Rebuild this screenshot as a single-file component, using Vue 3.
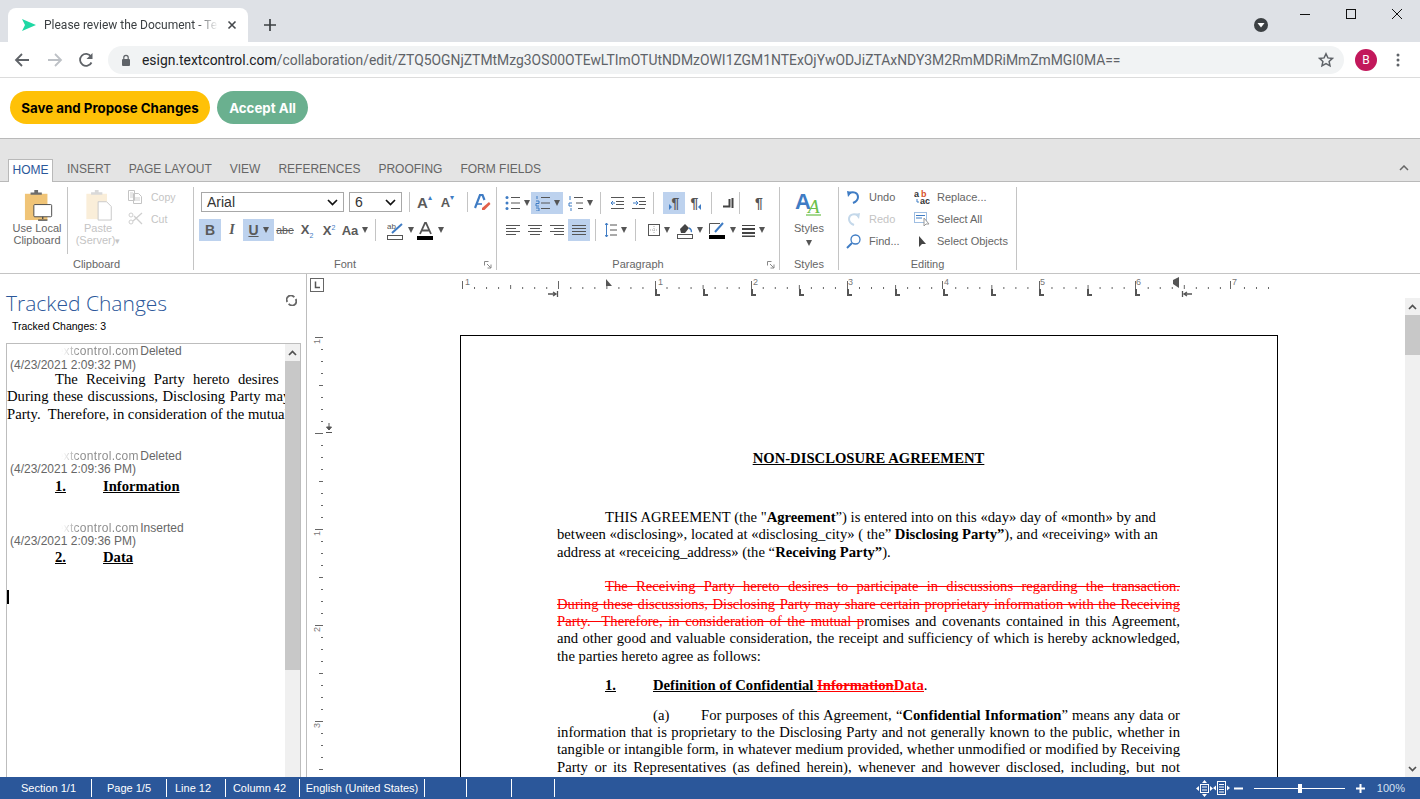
<script setup>
const url = 'ZTQ5OGNjZTMtMzg3OS00OTEwLTImOTUtNDMzOWI1ZGM1NTExOjYwODJiZTAxNDY3M2RmMDRiMmZmMGI0MA=='

const tabs = ['INSERT', 'PAGE LAYOUT', 'VIEW', 'REFERENCES', 'PROOFING', 'FORM FIELDS']

const deletedLines = [
  'The Receiving Party hereto desires to participate in discussions regarding the transaction.',
  'During these discussions, Disclosing Party may share certain proprietary information with the Receiving',
  'Party.  Therefore, in consideration of the mutual p'
]

const statusItems = ['Section 1/1', 'Page 1/5', 'Line 12', 'Column 42', 'English (United States)', '', '', '']

// horizontal ruler, x values are relative to the left of the document pane
const hTicks = []
for (let i = 0; i <= 67; i++) {
  if (i % 8 === 0) continue
  const x = 155 + i * 12.03
  hTicks.push({ x, y: i % 4 === 0 ? 285 - 274 : 287 - 274, h: i % 4 === 0 ? 4 : 2 })
}
const hInches = [155, 251, 348, 444, 540, 635, 732, 828, 923]
const hLabels = [
  { x: 158, t: '1' }, { x: 351, t: '1' }, { x: 446, t: '2' }, { x: 541, t: '3' },
  { x: 637, t: '4' }, { x: 733, t: '5' }, { x: 829, t: '6' }, { x: 925, t: '7' }
]
const tabStops = []
for (let x = 348; x <= 828; x += 48) tabStops.push(x)

// vertical ruler, y values are relative to the top of the page row
const vTicks = []
for (let k = 0; k < 37; k++) {
  const w = k % 8 === 0 ? 8 : k % 4 === 0 ? 4 : 2
  vTicks.push({ y: 2 + k * 12, x: 16 - w, w })
}
const vLabels = [
  { y: 3, t: '1' }, { y: 195, t: '1' }, { y: 291, t: '2' }, { y: 387, t: '3' }
]
</script>

<template>
  <div class="window">
    <div class="tabstrip">
      <div class="tab">
        <svg class="favicon" width="16" height="14" viewBox="0 0 16 14"><path d="M1 1l14 6-14 6 3-6z" fill="#1fd8a4"/></svg>
        <span class="tab-title">Please review the Document - Textcontrol</span>
        <svg class="tab-close" width="10" height="10" viewBox="0 0 10 10"><path d="M1.500 1.500l7 7M8.500 1.500l-7 7" stroke="#45484c" stroke-width="1.600"/></svg>
      </div>
      <svg class="new-tab" width="14" height="14" viewBox="0 0 14 14"><path d="M7 1v12M1 7h12" stroke="#3c4043" stroke-width="1.700"/></svg>
      <div class="strip-right">
        <svg class="media" width="14" height="14" viewBox="0 0 14 14"><circle cx="7" cy="7" r="7" fill="#3c4043"/><path d="M3.500 5h7L7 9.500z" fill="#fff"/></svg>
        <svg class="win-btn" width="46" height="14" viewBox="0 0 46 14"><path d="M18 7.500h10" stroke="#111" stroke-width="1"/></svg>
        <svg class="win-btn" width="46" height="14" viewBox="0 0 46 14"><rect x="18.500" y="2.500" width="9" height="9" fill="none" stroke="#111"/></svg>
        <svg class="win-btn" width="46" height="14" viewBox="0 0 46 14"><path d="M18 2l10 10M28 2L18 12" stroke="#111" stroke-width="1"/></svg>
      </div>
    </div>

    <div class="toolbar">
      <svg class="nav" width="16" height="16" viewBox="0 0 16 16"><path d="M15 8H2M8 2L2 8l6 6" fill="none" stroke="#5f6368" stroke-width="1.800"/></svg>
      <svg class="nav nav-fwd" width="16" height="16" viewBox="0 0 16 16"><path d="M1 8h13M8 2l6 6-6 6" fill="none" stroke="#bdc1c6" stroke-width="1.800"/></svg>
      <svg class="nav nav-reload" width="16" height="16" viewBox="0 0 16 16"><path d="M13.500 10.500A6 6 0 1 1 13 4.500" fill="none" stroke="#5f6368" stroke-width="1.800"/><path d="M14.500 1v6h-6z" fill="#5f6368"/></svg>
      <div class="omnibox">
        <svg width="10" height="12" viewBox="0 0 10 12"><rect x="1" y="5" width="8" height="7" rx="1" fill="#5f6368"/><path d="M2.800 5V3.500a2.200 2.200 0 0 1 4.400 0V5" fill="none" stroke="#5f6368" stroke-width="1.200"/></svg>
        <span class="url"><span class="host">esign.textcontrol.com</span>/collaboration/edit/{{ url }}</span>
        <svg class="star" width="16" height="16" viewBox="0 0 16 16"><path d="M8 1.800l1.900 4.100 4.500.5-3.300 3 .9 4.400L8 11.600l-4 2.200.9-4.400-3.300-3 4.500-.5z" fill="none" stroke="#5f6368" stroke-width="1.500"/></svg>
      </div>
      <div class="avatar">B</div>
      <svg class="dots" width="4" height="14" viewBox="0 0 4 14"><circle cx="2" cy="2" r="1.500" fill="#5f6368"/><circle cx="2" cy="7" r="1.500" fill="#5f6368"/><circle cx="2" cy="12" r="1.500" fill="#5f6368"/></svg>
    </div>

    <div class="actions">
      <button class="pill pill-save">Save and Propose Changes</button>
      <button class="pill pill-accept">Accept All</button>
    </div>

    <div class="ribbon-tabs">
      <div class="rtab rtab-active">HOME</div>
      <div v-for="t in tabs" :key="t" class="rtab">{{ t }}</div>
      <svg class="collapse" width="10" height="6" viewBox="0 0 10 6"><path d="M1 5l4-4 4 4" fill="none" stroke="#666" stroke-width="1.500"/></svg>
    </div>

    <div class="ribbon">
      <!-- clipboard -->
      <section class="group g-clip">
        <div class="group-body clip-body">
          <div class="big-btn first">
            <svg width="30" height="31" viewBox="0 0 32 33">
              <rect x="1" y="4" width="24" height="28" fill="#f0c477"/>
              <path d="M7 5V2.500h4V0h4v2.500h4V5z" fill="#6d6d6d"/>
              <rect x="10.500" y="15.500" width="19" height="13" rx="1" fill="#fff" stroke="#444"/>
              <path d="M20 28.500v2.500M15 32h10" stroke="#444" stroke-width="1.300"/>
            </svg>
            <span class="big-label">Use Local<br>Clipboard</span>
          </div>
          <i class="vsep tall"></i>
          <div class="big-btn off">
            <svg width="28" height="31" viewBox="0 0 29 33">
              <rect x="0" y="4" width="22" height="27" fill="#faeed9"/>
              <path d="M5 5V2.500h4V0h4v2.500h4V5z" fill="#d9d9d9"/>
              <path d="M12.500 12.500h9l5 5v14.500h-14z" fill="#fff" stroke="#c8c8c8"/>
            </svg>
            <span class="big-label">Paste<br>(Server)<b class="mini-caret">▾</b></span>
          </div>
          <div class="small-col off">
            <div class="small-row">
              <svg width="15" height="14" viewBox="0 0 15 14"><path d="M.5.500h6v10h-6zM5.500 3.500h5l3 3v7h-8z" fill="#fff" stroke="#c4c4c4"/><path d="M2 3h3M2 5h3M2 7h3M7 8h5M7 10h5" stroke="#cfcfcf"/></svg>
              <span>Copy</span>
            </div>
            <div class="small-row">
              <svg width="15" height="14" viewBox="0 0 15 14"><path d="M14 1L5 9M14 12L6 4" stroke="#cfcfcf" stroke-width="1.300"/><circle cx="3" cy="3" r="2" fill="none" stroke="#cfcfcf"/><circle cx="3" cy="10" r="2" fill="none" stroke="#cfcfcf"/></svg>
              <span>Cut</span>
            </div>
          </div>
        </div>
        <div class="group-name">Clipboard</div>
      </section>

      <!-- font -->
      <section class="group g-font">
        <div class="group-body">
          <div class="row font-row1">
            <div class="fake-select sel-font">Arial<svg width="11" height="7" viewBox="0 0 11 7"><path d="M1 1l4.500 4.500L10 1" fill="none" stroke="#111" stroke-width="1.700"/></svg></div>
            <div class="fake-select sel-size">6<svg width="11" height="7" viewBox="0 0 11 7"><path d="M1 1l4.500 4.500L10 1" fill="none" stroke="#111" stroke-width="1.700"/></svg></div>
            <i class="vsep sep-a"></i>
            <div class="ib w23"><span class="glyph-a">A</span><b class="up-mark">▴</b></div>
            <div class="ib w23"><span class="glyph-a small">A</span><b class="up-mark">▾</b></div>
            <i class="vsep sep-a2"></i>
            <div class="ib w20">
              <svg width="17" height="16" viewBox="0 0 17 16"><path d="M1 14L6 1h2.500l2 5" fill="none" stroke="#3f7cc4" stroke-width="2.200"/><path d="M3 10h5" stroke="#3f7cc4" stroke-width="1.600"/><path d="M8 14l7-6 1.500 2-6 6H8z" fill="#e2604a"/></svg>
            </div>
          </div>
          <div class="row font-row2">
            <div class="ib w22 on"><b class="t-b">B</b></div>
            <div class="ib w22"><i class="t-i">I</i></div>
            <div class="ib w31 on"><span class="t-u">U</span><i class="caret"></i></div>
            <div class="ib w22"><span class="t-abe">abe</span></div>
            <div class="ib w22"><span class="t-x">X<sub>2</sub></span></div>
            <div class="ib w22"><span class="t-x">X<sup>2</sup></span></div>
            <div class="ib w30"><span class="t-aa">Aa</span><i class="caret"></i></div>
            <i class="vsep sep-b"></i>
            <div class="ib w30">
              <svg width="17" height="19" viewBox="0 0 17 19"><text x="0" y="8" class="svg-mini">ab</text><path d="M5 12L15 3" stroke="#3f7cc4" stroke-width="2"/><rect x=".5" y="14.500" width="15" height="4" fill="#fff" stroke="#555"/></svg>
              <i class="caret"></i>
            </div>
            <div class="ib w30">
              <svg width="17" height="19" viewBox="0 0 17 19"><path d="M3 13L8 2h1l5 11M5 9.500h7" fill="none" stroke="#555" stroke-width="1.800"/><rect x="0" y="15" width="16" height="4" fill="#000"/></svg>
              <i class="caret"></i>
            </div>
          </div>
        </div>
        <div class="group-name">Font
          <svg class="launcher" width="8" height="8" viewBox="0 0 8 8"><path d="M.5.500h4M.5.500v4M3 3l4 4M7 3.500V7H3.500" fill="none" stroke="#888"/></svg>
        </div>
      </section>

      <!-- paragraph -->
      <section class="group g-para">
        <div class="group-body">
          <div class="row para-row1">
            <div class="ib w28">
              <svg width="15" height="16" viewBox="0 0 15 16"><g fill="#3f7cc4"><circle cx="2" cy="2.500" r="1.500"/><circle cx="2" cy="8" r="1.500"/><circle cx="2" cy="13.500" r="1.500"/></g><path d="M6 2.500h9M6 8h9M6 13.500h9" stroke="#555"/></svg>
              <i class="caret"></i>
            </div>
            <div class="ib w32 on">
              <svg width="15" height="16" viewBox="0 0 15 16"><path d="M2 1v3M1 6h3v2.500H1V11h3M1 13h3v3H1" fill="none" stroke="#3f7cc4"/><path d="M6 2.500h9M6 8h9M6 13.500h9" stroke="#555"/></svg>
              <i class="caret"></i>
            </div>
            <div class="ib w30 gap3">
              <svg width="15" height="16" viewBox="0 0 15 16"><path d="M2 1v4M4 8H1v3h3M3 13v3" fill="none" stroke="#3f7cc4"/><path d="M6 2.500h9M8 8h7M10 13.500h5" stroke="#555"/></svg>
              <i class="caret"></i>
            </div>
            <i class="vsep sep-c"></i>
            <div class="ib w22">
              <svg width="14" height="12" viewBox="0 0 14 12"><path d="M1 .500h13M6 4.500h8M6 7.500h8M1 11.500h13" stroke="#555"/><path d="M5 6H1M3 4L1 6l2 2" fill="none" stroke="#3f7cc4"/></svg>
            </div>
            <div class="ib w22">
              <svg width="14" height="12" viewBox="0 0 14 12"><path d="M0 .500h13M7 4.500h7M7 7.500h7M0 11.500h13" stroke="#555"/><path d="M1 6h5M4 4l2 2-2 2" fill="none" stroke="#3f7cc4"/></svg>
            </div>
            <i class="vsep sep-d"></i>
            <div class="ib w22 on no-gap"><i class="dir-mark to-right"></i><span class="pilcrow">¶</span></div>
            <div class="ib w22 no-gap"><span class="pilcrow">¶</span><i class="dir-mark to-left"></i></div>
            <i class="vsep sep-e"></i>
            <div class="ib w22">
              <svg width="11" height="10" viewBox="0 0 11 10"><path d="M0 8.500h6.500V1M9.500 0v10" fill="none" stroke="#444" stroke-width="2"/></svg>
            </div>
            <i class="vsep sep-f"></i>
            <div class="ib w22"><span class="pilcrow">¶</span></div>
          </div>
          <div class="row para-row2">
            <div class="ib w22"><svg width="15" height="11" viewBox="0 0 15 11"><path d="M0 .500h14M0 3.500h10M0 6.500h14M0 9.500h10" stroke="#555"/></svg></div>
            <div class="ib w22"><svg width="15" height="11" viewBox="0 0 15 11"><path d="M0 .500h14M2 3.500h10M0 6.500h14M2 9.500h10" stroke="#555"/></svg></div>
            <div class="ib w22"><svg width="15" height="11" viewBox="0 0 15 11"><path d="M0 .500h14M4 3.500h10M0 6.500h14M4 9.500h10" stroke="#555"/></svg></div>
            <div class="ib w22 on"><svg width="15" height="11" viewBox="0 0 15 11"><path d="M0 .500h14M0 3.500h14M0 6.500h14M0 9.500h14" stroke="#555"/></svg></div>
            <i class="vsep sep-g"></i>
            <div class="ib w29">
              <svg width="12" height="16" viewBox="0 0 12 16"><path d="M1.500 1v14M0 3l1.500-2L3 3M0 13l1.500 2L3 13" fill="none" stroke="#3f7cc4"/><path d="M5 3h7M5 8h7M5 13h7" stroke="#555"/></svg>
              <i class="caret"></i>
            </div>
            <i class="vsep sep-h"></i>
            <div class="ib w30">
              <svg width="12" height="12" viewBox="0 0 12 12"><rect x=".5" y=".5" width="11" height="11" fill="none" stroke="#555"/><path d="M6 2v8M2 6h8" stroke="#aaa" stroke-dasharray="1 1"/></svg>
              <i class="caret"></i>
            </div>
            <div class="ib w32">
              <svg width="16" height="18" viewBox="0 0 16 18"><path d="M3 8l5-5 4 4-4 5H4z" fill="#444"/><path d="M12 7c2 1 3 3 2 4" fill="none" stroke="#3f7cc4" stroke-width="1.500"/><rect x=".5" y="13.500" width="15" height="4" fill="#fff" stroke="#555"/></svg>
              <i class="caret"></i>
            </div>
            <div class="ib w32">
              <svg width="17" height="18" viewBox="0 0 17 18"><path d="M.5 13V2.500H11" fill="none" stroke="#555"/><path d="M6 11L14 2" stroke="#3f7cc4" stroke-width="2"/><rect x="0" y="14" width="16" height="4" fill="#000"/></svg>
              <i class="caret"></i>
            </div>
            <div class="ib w30">
              <svg width="13" height="13" viewBox="0 0 13 13"><path d="M0 1h13v1H0zM0 4h13v2H0zM0 8h13v2H0zM0 11.500h13V13H0z" fill="#444"/></svg>
              <i class="caret"></i>
            </div>
          </div>
        </div>
        <div class="group-name">Paragraph
          <svg class="launcher" width="8" height="8" viewBox="0 0 8 8"><path d="M.5.500h4M.5.500v4M3 3l4 4M7 3.500V7H3.500" fill="none" stroke="#888"/></svg>
        </div>
      </section>

      <!-- styles -->
      <section class="group g-styles">
        <div class="group-body styles-body">
          <svg width="28" height="26" viewBox="0 0 28 26">
            <text x="0" y="18" class="svg-styles-a">A</text>
            <text x="13" y="22" class="svg-styles-b">A</text>
            <path d="M11 24h15" stroke="#6cc04a" stroke-width="1.200"/>
          </svg>
          <span class="styles-text">Styles</span>
          <i class="caret"></i>
        </div>
        <div class="group-name">Styles</div>
      </section>

      <!-- editing -->
      <section class="group g-edit">
        <div class="group-body edit-body">
          <div class="edit-col">
            <div class="edit-row">
              <svg width="15" height="15" viewBox="0 0 15 15"><path d="M3 3.500c4-2.500 9-1 9 3.500 0 3-2.500 5-5 6" fill="none" stroke="#3f7cc4" stroke-width="2"/><path d="M1 1l1 6 4-5z" fill="#3f7cc4"/></svg>
              <span>Undo</span>
            </div>
            <div class="edit-row off">
              <svg width="15" height="15" viewBox="0 0 15 15"><path d="M12 3.500C8 1 3 2.500 3 7c0 3 2.500 5 5 6" fill="none" stroke="#c4d8ea" stroke-width="2"/><path d="M14 1l-1 6-4-5z" fill="#c4d8ea"/></svg>
              <span>Redo</span>
            </div>
            <div class="edit-row">
              <svg width="15" height="15" viewBox="0 0 15 15"><circle cx="9.500" cy="5.500" r="4.500" fill="none" stroke="#3f7cc4" stroke-width="1.300"/><path d="M6 9l-5 5" stroke="#3f7cc4" stroke-width="2"/></svg>
              <span>Find...</span>
            </div>
          </div>
          <div class="edit-col edit-col2">
            <div class="edit-row">
              <svg width="16" height="15" viewBox="0 0 16 15"><text x="0" y="6.500" class="svg-mini2">a</text><text x="7" y="6.500" class="svg-mini2 red">b</text><text x="6" y="14" class="svg-mini2">ac</text><path d="M3 9v3h2" fill="none" stroke="#3f7cc4"/></svg>
              <span>Replace...</span>
            </div>
            <div class="edit-row">
              <svg width="16" height="15" viewBox="0 0 16 15"><rect x=".5" y=".5" width="12" height="10" fill="none" stroke="#3f7cc4" stroke-dasharray="1 1"/><path d="M2 3.500h9M2 6h6" stroke="#3f7cc4"/><path d="M10 6v8l2-2h3z" fill="#fff" stroke="#999"/></svg>
              <span>Select All</span>
            </div>
            <div class="edit-row">
              <svg width="16" height="15" viewBox="0 0 16 15"><path d="M5 2v11l3-3h4z" fill="#444"/></svg>
              <span>Select Objects</span>
            </div>
          </div>
        </div>
        <div class="group-name">Editing</div>
      </section>
    </div>

    <div class="workspace">
      <aside class="panel">
        <h2 class="panel-title">Tracked Changes</h2>
        <svg class="refresh" width="11" height="11" viewBox="0 0 12 12"><path d="M1.500 7.500A4.500 4.500 0 0 1 9 2.500M10.500 4.500A4.500 4.500 0 0 1 3 9.500" fill="none" stroke="#666" stroke-width="2"/></svg>
        <div class="panel-count">Tracked Changes: 3</div>
        <div class="change-list">
          <div class="change-scroll">
            <div class="change-head first"><span class="faded">textcontrol.com</span> Deleted</div>
            <div class="change-date date1">(4/23/2021 2:09:32 PM)</div>
            <div class="clip-text">
              <div class="just-line indent">{{ deletedLines[0] }}</div>
              <div class="just-line">{{ deletedLines[1] }}</div>
              <div class="plain-line">{{ deletedLines[2] }}</div>
            </div>

            <div class="change-head second"><span class="faded">textcontrol.com</span> Deleted</div>
            <div class="change-date">(4/23/2021 2:09:36 PM)</div>
            <div class="clause clause1"><span class="clause-no">1.</span><span>Information</span></div>

            <div class="change-head third"><span class="faded">textcontrol.com</span> Inserted</div>
            <div class="change-date">(4/23/2021 2:09:36 PM)</div>
            <div class="clause clause2"><span class="clause-no">2.</span><span>Data</span></div>
            <div class="caret-bar"></div>
          </div>
          <div class="sbar">
            <div class="sbar-btn"><svg width="9" height="6" viewBox="0 0 9 6"><path d="M1 5l3.500-3.500L8 5" fill="none" stroke="#505050" stroke-width="1.700"/></svg></div>
            <div class="sbar-thumb list-thumb"></div>
          </div>
        </div>
      </aside>

      <main class="doc">
        <div class="doc-main">
          <div class="hruler">
            <svg width="1098" height="61" viewBox="0 0 1098 61">
              <rect x="3.500" y="4.500" width="13" height="13" fill="#fff" stroke="#666"/>
              <path d="M8.500 7.500v6H13" fill="none" stroke="#555" stroke-width="1.500"/>
              <rect v-for="(t, i) in hTicks" :key="'t' + i" :x="t.x" :y="t.y" width="1" :height="t.h" fill="#666"/>
              <rect v-for="x in hInches" :key="'i' + x" :x="x" y="7" width="1" height="8" fill="#666"/>
              <text v-for="(l, i) in hLabels" :key="'l' + i" :x="l.x" y="11" class="rnum">{{ l.t }}</text>
              <path v-for="x in tabStops" :key="'s' + x" :d="`M${x} 15h2v5h3v2h-5z`" fill="#555"/>
              <path d="M241 20h8M246 18l3 2-3 2M250.500 17v6" fill="none" stroke="#555" stroke-width="1.300"/>
              <path d="M299 5v7h6z" fill="#555"/>
              <path d="M866 6l6-3v11l-6-4z" fill="#555"/>
              <path d="M885 20h-8M880 18l-3 2 3 2M875.500 17v6" fill="none" stroke="#555" stroke-width="1.300"/>
            </svg>
          </div>
          <div class="doc-row">
            <svg class="vruler" width="153" height="442" viewBox="0 0 153 442">
              <rect v-for="(t, i) in vTicks" :key="i" :x="t.x" :y="t.y" :width="t.w" height="1" fill="#666"/>
              <text v-for="(l, i) in vLabels" :key="'v' + i" class="rnum" :transform="`translate(13 ${l.y + 6}) rotate(-90)`">{{ l.t }}</text>
              <path d="M22 88v7M19.500 92l2.500 3 2.500-3zM19 97.500h6" fill="#555" stroke="#555"/>
            </svg>
            <article class="page">
              <h1 class="doc-title">NON-DISCLOSURE AGREEMENT</h1>
              <p class="para p1">
                <span class="plain-line indent">THIS AGREEMENT (the "<b>Agreement</b>”) is entered into on this «day» day of «month» by and</span>
                <span class="plain-line">between «disclosing», located at «disclosing_city» ( the” <b>Disclosing Party”</b>), and «receiving» with an</span>
                <span class="plain-line">address at «receicing_address» (the “<b>Receiving Party”</b>).</span>
              </p>
              <p class="para p2">
                <span class="just-line indent"><del>The Receiving Party hereto desires to participate in discussions regarding the transaction.</del></span>
                <span class="just-line"><del>During these discussions, Disclosing Party may share certain proprietary information with the Receiving</del></span>
                <span class="just-line"><del>{{ deletedLines[2] }}</del>romises and covenants contained in this Agreement,</span>
                <span class="just-line">and other good and valuable consideration, the receipt and sufficiency of which is hereby acknowledged,</span>
                <span class="plain-line">the parties hereto agree as follows:</span>
              </p>
              <p class="para p3">
                <span class="plain-line heading"><b class="hno">1.</b><b class="hu">Definition of Confidential <del class="del-under">Information</del><ins>Data</ins></b>.</span>
              </p>
              <p class="para p4">
                <span class="just-line indent2"><span class="sub-no">(a)</span>For purposes of this Agreement, “<b>Confidential Information</b>” means any data or</span>
                <span class="just-line">information that is proprietary to the Disclosing Party and not generally known to the public, whether in</span>
                <span class="just-line">tangible or intangible form, in whatever medium provided, whether unmodified or modified by Receiving</span>
                <span class="just-line">Party or its Representatives (as defined herein), whenever and however disclosed, including, but not</span>
              </p>
            </article>
          </div>
        </div>
        <div class="doc-scroll">
          <div class="sbar-btn"><svg width="9" height="6" viewBox="0 0 9 6"><path d="M1 5l3.500-3.500L8 5" fill="none" stroke="#505050" stroke-width="1.700"/></svg></div>
          <div class="sbar-thumb doc-thumb"></div>
          <div class="sbar-spacer"></div>
          <div class="sbar-btn"><svg width="9" height="6" viewBox="0 0 9 6"><path d="M1 1l3.500 3.500L8 1" fill="none" stroke="#505050" stroke-width="1.700"/></svg></div>
        </div>
      </main>
    </div>

    <footer class="status">
      <div v-for="(s, i) in statusItems" :key="i" class="status-item" :class="'st' + i">{{ s }}</div>
      <div class="status-right">
        <svg class="fit-page" width="17" height="17" viewBox="0 0 17 17"><rect x="4.500" y="4.500" width="8" height="8" fill="none" stroke="#fff"/><path d="M6 7h5M6 10h5" stroke="#fff"/><path d="M8.500 0l2.500 3H6zM8.500 17L6 14h5zM0 8.500L3 6v5zM17 8.500L14 11V6z" fill="#fff"/></svg>
        <svg width="17" height="14" viewBox="0 0 17 14"><rect x="4.500" y=".5" width="8" height="13" fill="none" stroke="#fff"/><path d="M6 3.500h5M6 6h5M6 8.500h5M6 11h5" stroke="#fff"/><path d="M0 7l3-2.500v5zM17 7l-3 2.500v-5z" fill="#fff"/></svg>
        <svg class="zoom-minus" width="9" height="3" viewBox="0 0 9 3"><rect width="9" height="2" y=".5" fill="#fff"/></svg>
        <div class="slider"><i class="slider-knob"></i></div>
        <svg class="zoom-plus" width="9" height="9" viewBox="0 0 9 9"><path d="M4.500 0v9M0 4.500h9" stroke="#fff" stroke-width="2"/></svg>
        <span class="zoom-val">100%</span>
      </div>
    </footer>
  </div>
</template>

<style>
html, body {
  margin: 0;
  padding: 0;
  overflow: hidden;
  background: #fff;
}
</style>

<style scoped>
.window {
  width: 1420px;
  height: 799px;
  display: flex;
  flex-direction: column;
  overflow: hidden;
  font-family: "Liberation Sans", Arial, sans-serif;
  background: #fff;
}

/* browser chrome */
.tabstrip {
  height: 42px;
  flex: none;
  background: #dee1e6;
  display: flex;
  align-items: flex-end;
}
.tab {
  width: 240px;
  height: 34px;
  margin-left: 8px;
  background: #fff;
  border-radius: 8px 8px 0 0;
  display: flex;
  align-items: center;
  box-sizing: border-box;
  padding-left: 13px;
}
.favicon { flex: none; }
.tab-title {
  width: 174px;
  margin-left: 7px;
  font: 12px Roboto, sans-serif;
  color: #3c4043;
  white-space: nowrap;
  overflow: hidden;
  -webkit-mask-image: linear-gradient(90deg, #000 88%, transparent);
  mask-image: linear-gradient(90deg, #000 88%, transparent);
}
.tab-close { margin-left: 9px; }
.new-tab {
  margin: 0 0 10px 15px;
}
.strip-right {
  margin-left: auto;
  align-self: stretch;
  display: flex;
  align-items: flex-start;
  padding-top: 7px;
}
.media { margin: 11px 14px 0 0; }
.win-btn { display: block; }
.toolbar {
  height: 36px;
  flex: none;
  box-sizing: border-box;
  border-bottom: 1px solid #dcdcdc;
  display: flex;
  align-items: center;
  padding: 0 20px 0 14px;
}
.nav { margin-right: 17px; }
.nav-fwd { margin-right: 15px; }
.nav-reload { margin-right: 14px; }
.omnibox {
  width: 1236px;
  height: 28px;
  margin-top: 1px;
  background: #f1f3f4;
  border-radius: 14px;
  display: flex;
  align-items: center;
  padding: 0 10px 0 13px;
  box-sizing: border-box;
}
.url {
  margin-left: 11px;
  font: 13.900px Roboto, sans-serif;
  color: #5f6368;
  white-space: nowrap;
}
.host { color: #202124; }
.star { margin-left: auto; }
.avatar {
  width: 22px;
  height: 22px;
  margin-left: 11px;
  border-radius: 50%;
  background: #c2185b;
  color: #fff;
  font: 12px/22px Roboto, sans-serif;
  text-align: center;
}
.dots { margin-left: 19px; }

/* page actions */
.actions {
  height: 60px;
  flex: none;
  box-sizing: border-box;
  padding: 13px 0 0 10px;
  display: flex;
  gap: 7px;
}
.pill {
  height: 33px;
  border: 0;
  border-radius: 17px;
  font: 700 13.300px Inter, sans-serif;
  padding: 0;
}
.pill-save {
  width: 200px;
  background: #ffc107;
  color: #000;
}
.pill-accept {
  width: 91px;
  background: #6ab08f;
  color: #fff;
}

/* ribbon */
.ribbon-tabs {
  height: 44px;
  flex: none;
  box-sizing: border-box;
  background: #e4e4e4;
  border-top: 1px solid #b9b9b9;
  border-bottom: 1px solid #b9b9b9;
  display: flex;
  align-items: flex-end;
  padding-left: 8px;
}
.rtab {
  height: 22px;
  font-size: 12px;
  line-height: 20px;
  color: #666;
  padding: 0 9px;
}
.rtab-active {
  width: 45px;
  box-sizing: border-box;
  height: 23px;
  margin-bottom: -1px;
  padding: 0;
  text-align: center;
  line-height: 21px;
  background: #fff;
  border: 1px solid #b9b9b9;
  border-bottom: 0;
  color: #2b579a;
  margin-right: 5px;
}
.collapse {
  margin: 0 11px 10px auto;
}
.ribbon {
  height: 92px;
  flex: none;
  box-sizing: border-box;
  border-bottom: 1px solid #c4c4c4;
  display: flex;
  padding-top: 5px;
  color: #666;
}
.group {
  height: 83px;
  box-sizing: border-box;
  border-right: 1px solid #c4c4c4;
  display: flex;
  flex-direction: column;
}
.g-clip { width: 194px; }
.g-font { width: 303px; }
.g-para { width: 283px; }
.g-styles { width: 59px; }
.g-edit { width: 178px; }
.group-body { height: 72px; }
.group-name {
  font-size: 11px;
  line-height: 11px;
  text-align: center;
  color: #666;
  position: relative;
}
.launcher {
  position: absolute;
  right: 4px;
  top: 2px;
}
.row {
  display: flex;
  align-items: center;
}
.off { color: #c4c4c4; }
.clip-body {
  display: flex;
}
.vsep {
  display: block;
  width: 1px;
  background: #c4c4c4;
  flex: none;
}
.vsep.tall { height: 67px; }
.big-btn {
  width: 60px;
  flex: none;
  padding-top: 3px;
  box-sizing: border-box;
  display: flex;
  flex-direction: column;
  align-items: center;
}
.big-btn.first { margin-left: 7px; }
.big-btn svg { margin-left: 3px; }
.big-label {
  font-size: 11px;
  line-height: 12px;
  text-align: center;
  margin-top: 1px;
  white-space: nowrap;
}
.mini-caret { font-size: 9px; font-weight: 400; }
.small-col { margin-top: -1px; }
.small-row {
  display: flex;
  align-items: center;
  height: 22px;
  font-size: 10.500px;
  gap: 8px;
}
.fake-select {
  height: 20px;
  box-sizing: border-box;
  border: 1px solid #a8a8a8;
  font-size: 14px;
  color: #333;
  display: flex;
  align-items: center;
  justify-content: space-between;
  padding: 0 5px;
  background: #fff;
}
.sel-font { width: 143px; margin-left: 7px; }
.sel-size { width: 53px; margin-left: 5px; }
.font-row1 { height: 20px; margin-top: 5px; }
.font-row2 { height: 22px; margin-top: 7px; padding-left: 5px; }
.para-row1 { height: 22px; margin-top: 5px; padding-left: 6px; }
.para-row2 { height: 22px; margin-top: 5px; padding-left: 5px; }
.sep-a { height: 20px; margin: 0 3px 0 7px; }
.sep-a2 { height: 20px; margin: 0 4px 0 8px; }
.sep-b { height: 22px; margin: 0 9px 0 5px; }
.sep-c { height: 22px; margin: 0 5px; }
.sep-d { height: 22px; margin: 0 9px 0 3px; }
.sep-e { height: 22px; margin: 0 5px 0 4px; }
.sep-f { height: 22px; margin: 0 8px 0 0; }
.sep-g { height: 22px; margin: 0 5px; }
.sep-h { height: 22px; margin: 0 8px 0 5px; }
.ib {
  height: 22px;
  flex: none;
  display: flex;
  align-items: center;
  justify-content: center;
  gap: 4px;
  color: #5a5a5a;
}
.ib.on { background: #bdd2ee; }
.no-gap { gap: 0; }
.w20 { width: 20px; }
.w22 { width: 22px; }
.w23 { width: 23px; }
.w28 { width: 28px; }
.w29 { width: 29px; }
.w30 { width: 30px; }
.w31 { width: 31px; }
.w32 { width: 32px; }
.gap3 { margin-left: 2px; }
.caret {
  display: block;
  width: 0;
  height: 0;
  border-left: 3.500px solid transparent;
  border-right: 3.500px solid transparent;
  border-top: 6px solid #555;
}
.dir-mark {
  display: block;
  width: 0;
  height: 0;
  margin-top: 8px;
  border-top: 3px solid transparent;
  border-bottom: 3px solid transparent;
}
.to-right { border-left: 3px solid #3f7cc4; }
.to-left { border-right: 3px solid #3f7cc4; }
.glyph-a { font-size: 15px; font-weight: 700; }
.glyph-a.small { font-size: 13px; }
.up-mark {
  font-size: 8px;
  color: #3f7cc4;
  margin: -10px 0 0 -4px;
  font-weight: 400;
}
.t-b { font-size: 14px; }
.t-i { font: italic 700 14px "Liberation Serif", serif; }
.t-u { font-size: 14px; font-weight: 700; text-decoration: underline; }
.t-abe { font-size: 10.500px; text-decoration: line-through; }
.t-x { font-size: 13px; font-weight: 700; }
.t-x sub, .t-x sup { font-size: 7px; color: #3f7cc4; font-weight: 400; }
.t-aa { font-size: 13px; font-weight: 700; }
.svg-mini { font: 8px "Liberation Sans", sans-serif; fill: #555; }
.pilcrow { font: 700 14px "Liberation Sans", sans-serif; color: #555; }
.styles-body {
  display: flex;
  flex-direction: column;
  align-items: center;
}
.styles-body svg { margin-top: 4px; }
.styles-text { font-size: 11px; line-height: 14px; margin-top: 4px; }
.styles-body .caret { margin-top: 5px; }
.svg-styles-a { font: 700 22px "Liberation Sans", sans-serif; fill: #3f7cc4; }
.svg-styles-b { font: italic 19px "Liberation Serif", serif; fill: #6cc04a; }
.edit-body {
  display: flex;
}
.edit-col { width: 61px; padding-left: 7px; }
.edit-col2 { width: 100px; }
.edit-col2 .edit-row { gap: 7px; }
.edit-row {
  display: flex;
  align-items: center;
  height: 22px;
  gap: 8px;
  font-size: 11px;
  white-space: nowrap;
}
.edit-col .edit-row:first-child { margin-top: -1px; }
.svg-mini2 { font: 700 9px "Liberation Sans", sans-serif; fill: #333; }
.svg-mini2.red { fill: #d9532c; }

/* workspace */
.workspace {
  flex: 1;
  min-height: 0;
  display: flex;
}
.panel {
  width: 307px;
  flex: none;
  box-sizing: border-box;
  border-right: 1px solid #bdbdbd;
  position: relative;
  display: flex;
  flex-direction: column;
}
.panel-title {
  margin: 15px 0 0 6px;
  font: 300 21px/28px "Open Sans", sans-serif;
  color: #2b579a;
}
.refresh {
  position: absolute;
  left: 286px;
  top: 21px;
}
.panel-count {
  margin: 3px 0 0 12px;
  font-size: 10.500px;
  line-height: 13px;
  color: #000;
}
.change-list {
  flex: 1;
  min-height: 0;
  margin: 10px 5px 0 6px;
  border: 1px solid #bdbdbd;
  border-bottom: 0;
  display: flex;
}
.change-scroll {
  flex: 1;
  min-width: 0;
  overflow: hidden;
}
.change-head {
  height: 13px;
  line-height: 13px;
  font-size: 12px;
  padding-left: 46px;
  word-spacing: -2px;
  color: #666;
  white-space: nowrap;
}
.faded {
  letter-spacing: .3px;
  background: linear-gradient(90deg, #fff 8px, #eee 12px, #888 26px);
  -webkit-background-clip: text;
  background-clip: text;
  color: transparent;
}
.change-head.first { margin-top: 1px; }
.change-head.second { margin-top: 27px; }
.change-head.third { margin-top: 27px; }
.change-date {
  height: 13px;
  line-height: 13px;
  font-size: 12px;
  padding-left: 3px;
  color: #666;
}
.date1 { margin-top: 1px; }
.clip-text {
  width: 623px;
  font: 14.670px/17.400px "Liberation Serif", serif;
  margin-top: -1px;
  color: #000;
}
.just-line {
  display: block;
  height: 17.400px;
  text-align: justify;
  text-align-last: justify;
  white-space: pre-wrap;
}
.plain-line {
  display: block;
  height: 17.400px;
  white-space: pre-wrap;
}
.indent { padding-left: 48px; }
.clause {
  font: 700 14.670px/17px "Liberation Serif", serif;
  color: #000;
  padding-left: 48px;
  text-decoration: underline;
  display: flex;
}
.clause1 { margin-top: 2px; }
.clause2 { margin-top: 1px; }
.clause-no { width: 48px; }
.caret-bar {
  width: 2px;
  height: 14px;
  margin-top: 24px;
  background: #000;
}
.sbar {
  width: 15px;
  flex: none;
  background: #f0f0f0;
}
.sbar-btn {
  height: 17px;
  display: flex;
  align-items: center;
  justify-content: center;
  background: #f0f0f0;
}
.sbar-thumb { background: #c8c8c8; }
.list-thumb { height: 309px; }
.doc {
  flex: 1;
  min-width: 0;
  display: flex;
}
.doc-main {
  flex: 1;
  min-width: 0;
  display: flex;
  flex-direction: column;
}
.hruler {
  height: 61px;
  flex: none;
}
.hruler svg { display: block; }
.rnum { font: 9px "Liberation Sans", sans-serif; fill: #777; }
.doc-row {
  flex: 1;
  min-height: 0;
  display: flex;
  overflow: hidden;
}
.vruler { display: block; flex: none; }
.page {
  width: 818px;
  height: 800px;
  flex: none;
  box-sizing: border-box;
  border: 1px solid #000;
  padding: 114px 97px 0 96px;
  font: 14.670px/17.400px "Liberation Serif", serif;
  color: #000;
}
.doc-title {
  margin: 0;
  font: 700 14.670px/17px "Liberation Serif", serif;
  text-align: center;
  text-decoration: underline;
}
.para { margin: 0; }
.p1 { margin-top: 42px; }
.p2 { margin-top: 17px; }
.p3 { margin-top: 12px; }
.p4 { margin-top: 12px; }
del { color: #f00; text-decoration: line-through; }
ins { color: #f00; text-decoration: underline; }
.del-under { text-decoration: line-through underline; }
.heading { padding-left: 48px; }
.hno { display: inline-block; width: 48px; text-decoration: underline; }
.hu { text-decoration: underline; }
.indent2 { padding-left: 96px; }
.sub-no { display: inline-block; width: 48px; }
.doc-scroll {
  width: 15px;
  flex: none;
  margin-top: 24px;
  background: #f0f0f0;
  display: flex;
  flex-direction: column;
}
.doc-thumb { height: 40px; }
.sbar-spacer { flex: 1; }

/* status bar */
.status {
  height: 22px;
  flex: none;
  background: #2b579a;
  color: #fff;
  display: flex;
  align-items: center;
  font: 11px "Liberation Sans", sans-serif;
}
.status-item {
  height: 18px;
  line-height: 18px;
  box-sizing: border-box;
  border-right: 1px solid #fff;
  text-align: center;
  flex: none;
  white-space: nowrap;
}
.st0 { width: 92px; padding-left: 6px; }
.st1 { width: 75px; }
.st2 { width: 59px; padding-right: 6px; }
.st3 { width: 74px; padding-right: 6px; }
.st4 { width: 125px; }
.st5 { width: 42px; }
.st6 { width: 45px; }
.st7 { width: 43px; }
.status-right {
  margin-left: auto;
  display: flex;
  align-items: center;
  padding-right: 15px;
}
.status-right svg { display: block; margin-right: 2px; }
.status-right .fit-page { margin-right: 0; }
.zoom-minus { margin-left: 2px; }
.slider {
  width: 91px;
  height: 1px;
  margin-left: 9px;
  background: #fff;
  display: flex;
  align-items: center;
  padding-left: 44px;
  box-sizing: border-box;
}
.slider-knob {
  display: block;
  width: 4px;
  height: 9px;
  flex: none;
  background: #fff;
}
.zoom-plus { margin-left: 11px; }
.zoom-val { margin-left: 10px; font-size: 11px; color: #d6e0f0; }
</style>
